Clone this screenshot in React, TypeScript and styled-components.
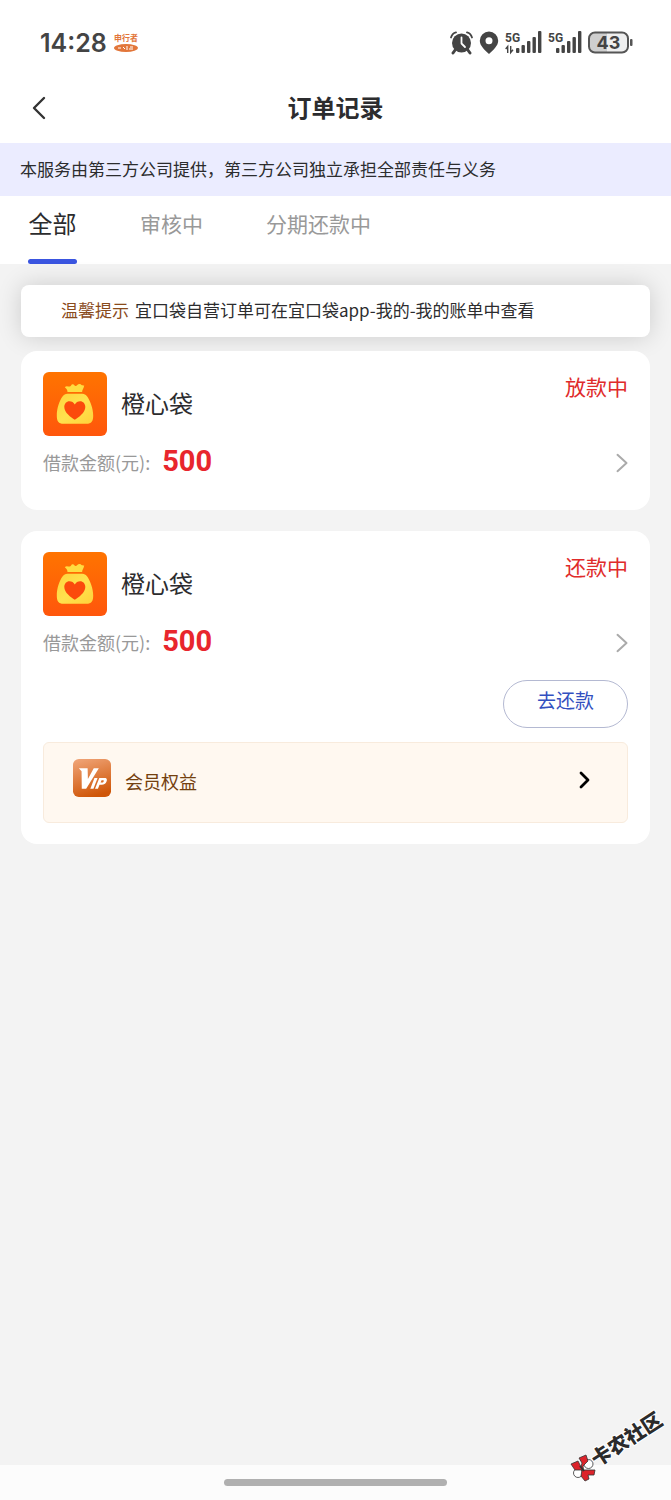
import React from "react";
import styled, { createGlobalStyle } from "styled-components";

const GlobalStyle = createGlobalStyle`
  *, *::before, *::after { box-sizing: border-box; }
  body {
    margin: 0;
    background: #f3f3f3;
    color: #2c2c2e;
    font-family: "Noto Sans CJK SC", "Noto Sans", sans-serif;
  }
  button { font: inherit; border: 0; background: none; padding: 0; cursor: pointer; }
  svg { display: block; flex: none; }
  h1, h2, p, ul, dl, dd { margin: 0; padding: 0; }
`;

const Page = styled.div`
  min-height: 100vh;
  display: flex;
  flex-direction: column;
  position: relative;
`;

const StatusBar = styled.div`
  height: 73px;
  padding: 12px 38px 0 40px;
  display: flex;
  align-items: center;
  justify-content: space-between;
  background: #fff;
`;

const StatusGroup = styled.div<{ $gap: number }>`
  display: flex;
  align-items: center;
  gap: ${(p) => p.$gap}px;
`;

const Clock = styled.time`
  font: 600 25px/32px Inter, sans-serif;
  color: #444;
`;

const Header = styled.header`
  height: 70px;
  padding: 0 27px;
  display: grid;
  grid-template-columns: 24px 1fr 24px;
  align-items: center;
  background: #fff;
`;

const IconButton = styled.button`
  display: flex;
  align-items: center;
  justify-content: center;
  color: inherit;
`;

const Title = styled.h1`
  padding-bottom: 2px;
  font-size: 24px;
  line-height: 32px;
  font-weight: 700;
  text-align: center;
`;

const Notice = styled.p`
  padding: 13px 20px 14px;
  background: #ebecff;
  font-size: 17px;
  line-height: 26px;
`;

const Tabs = styled.nav`
  height: 68px;
  padding: 0 28px;
  display: flex;
  gap: 63px;
  background: #fff;
`;

const Tab = styled.button<{ $active?: boolean }>`
  min-width: 49px;
  display: flex;
  flex-direction: column;
  align-items: center;
  justify-content: space-between;
  font-size: ${(p) => (p.$active ? 24 : 21)}px;
  line-height: 54px;
  color: ${(p) => (p.$active ? "#2c2c2e" : "#999")};
  white-space: nowrap;

  &::after {
    content: "";
    width: 100%;
    height: 5px;
    border-radius: 3px;
    background: ${(p) => (p.$active ? "#3a55e0" : "transparent")};
  }
`;

const Main = styled.main`
  flex: 1;
  padding: 21px;
`;

const Tip = styled.p`
  margin-bottom: 14px;
  padding: 12px 40px 14px;
  border-radius: 8px;
  background: #fff;
  box-shadow: 0 0 24px rgba(0, 0, 0, 0.16);
  font-size: 17px;
  line-height: 26px;
`;

const TipLabel = styled.strong`
  margin-right: 6px;
  font-weight: 400;
  color: #8a4b1c;
`;

const Card = styled.article`
  margin-bottom: 21px;
  padding: 21px 22px;
  border-radius: 16px;
  background: #fff;
`;

const CardTop = styled.div`
  display: flex;
  gap: 14px;
`;

const Name = styled.h2`
  flex: 1;
  font-size: 24px;
  line-height: 62px;
  font-weight: 400;
`;

const State = styled.span`
  font-size: 21px;
  line-height: 28px;
  color: #e02b2b;
`;

const AmountRow = styled.div`
  height: 53px;
  display: flex;
  align-items: center;
  justify-content: space-between;
  color: #999;
`;

const AmountLine = styled.dl`
  display: flex;
  align-items: center;
  gap: 12px;
  padding-bottom: 2px;
  font-size: 18px;
  line-height: 50px;
`;

const Amount = styled.dd`
  && { padding-bottom: 2px; }
  font: 700 29px/48px Roboto, sans-serif;
  color: #e8262d;
`;

const Actions = styled.div`
  display: flex;
  justify-content: flex-end;
  margin: 11px 0 14px;
`;

const RepayButton = styled.button`
  width: 125px;
  height: 48px;
  && {
    padding-bottom: 9px;
    border: 1px solid #b4b9d2;
  }
  border-radius: 24px;
  font-size: 19px;
  color: #3350c0;
`;

const Vip = styled.button`
  width: 100%;
  height: 81px;
  display: flex;
  align-items: center;
  gap: 14px;
  && {
    padding: 0 36px 8px 29px;
    border: 1px solid #f8ebdd;
    background: #fff8f0;
  }
  border-radius: 6px;
  text-align: left;
  color: #000;
`;

const VipIconBox = styled.span`
  padding-bottom: 2px;
`;

const VipLabel = styled.span`
  flex: 1;
  padding-top: 4px;
  font-size: 18px;
  line-height: 26px;
  color: #74400f;
`;

const VipArrow = styled.span`
  padding-top: 3px;
`;

const HomeArea = styled.footer`
  height: 35px;
  display: flex;
  align-items: center;
  justify-content: center;
  background: #fcfcfc;
`;

const HomeBar = styled.div`
  width: calc(100% / 3);
  height: 7px;
  border-radius: 4px;
  background: #b0b0b0;
`;

const Watermark = styled.svg`
  position: absolute;
  right: 0;
  bottom: 8px;
`;

const CarrierBadge = () => (
  <svg width="26" height="22" viewBox="0 0 26 22" aria-hidden="true">
    <text x="13" y="9" fontSize="8" fontWeight="700" textAnchor="middle" fill="#e2763a">申行者</text>
    <ellipse cx="13" cy="16" rx="12" ry="4" fill="#e2763a" />
    <path d="M5 16h3M10 15l2 2M14 14v4M17 15h3M16 17h4" stroke="#fff" strokeWidth="1" />
  </svg>
);

const AlarmIcon = () => (
  <svg width="23" height="24" viewBox="0 0 23 24" aria-hidden="true">
    <circle cx="11.500" cy="12" r="9.500" fill="#444" />
    <path d="M1 6.500C1.800 3.500 3.300 2 6 1.300M22 6.500C21.200 3.500 19.700 2 17 1.300" fill="none" stroke="#444" strokeWidth="1.800" strokeLinecap="round" />
    <path d="M5.500 18.500L3 22M17.500 18.500L20 22" stroke="#444" strokeWidth="3" strokeLinecap="round" />
    <path d="M11.500 6.500v6l3.500 3.500" fill="none" stroke="#fff" strokeWidth="1.800" strokeLinecap="round" strokeLinejoin="round" />
  </svg>
);

const PinIcon = () => (
  <svg width="20" height="24" viewBox="0 0 20 24" aria-hidden="true">
    <path fillRule="evenodd" d="M10 .5a9.200 9.200 0 0 0-9.200 9.200c0 5 5 9.300 9.200 13.300 4.200-4 9.200-8.300 9.200-13.300A9.200 9.200 0 0 0 10 .5zm0 5.700a3.500 3.500 0 1 1 0 7 3.500 3.500 0 0 1 0-7z" fill="#444" />
  </svg>
);

const SignalIcon = ({ data, start }: { data?: boolean; start: number }) => (
  <svg width={start + 26} height="24" viewBox={`0 0 ${start + 26} 24`} aria-hidden="true">
    <text x="0" y="11" fontSize="12" fontWeight="700" fontFamily="Roboto, sans-serif" fill="#444">5G</text>
    {data && <path d="M2.700 22v-6.500L.7 18M5.700 15v6.500L8 18.800" fill="none" stroke="#444" strokeWidth="1.400" />}
    {[17, 14, 10, 6, 0].map((top, i) => (
      <rect key={top} x={start + i * 5.500} y={top} width="3.400" height={22 - top} rx="1" fill="#444" />
    ))}
  </svg>
);

const BatteryIcon = () => (
  <svg width="45" height="24" viewBox="0 0 45 24" aria-hidden="true">
    <rect x="1" y="1.500" width="39" height="20" rx="6" fill="#efefef" />
    <path d="M7 1.500h12v20H7a6 6 0 0 1-6-6v-8a6 6 0 0 1 6-6z" fill="#cfcfcf" />
    <rect x="1" y="1.500" width="39" height="20" rx="6" fill="none" stroke="#555" strokeWidth="2" />
    <rect x="42" y="8" width="2.500" height="7" rx="1" fill="#555" />
    <text x="20.500" y="18" fontSize="18" fontWeight="700" textAnchor="middle" fontFamily="Inter, sans-serif" fill="#444">43</text>
  </svg>
);

const BackIcon = () => (
  <svg width="16" height="24" viewBox="0 0 16 24" aria-hidden="true">
    <path d="M13 2L3 12l10 10" fill="none" stroke="#333" strokeWidth="2.400" strokeLinecap="round" strokeLinejoin="round" />
  </svg>
);

const ChevronIcon = ({ bold }: { bold?: boolean }) => (
  <svg width="13" height="20" viewBox="0 0 13 20" aria-hidden="true">
    {bold ? (
      <path d="M3 3l7 7-7 7" fill="none" stroke="#000" strokeWidth="2.800" strokeLinecap="round" strokeLinejoin="round" />
    ) : (
      <path d="M2.500 1.800L11.500 10l-9 8.200" fill="none" stroke="#aaa" strokeWidth="2" strokeLinecap="round" strokeLinejoin="round" />
    )}
  </svg>
);

const BagLogo = ({ id }: { id: string }) => (
  <svg width="64" height="64" viewBox="0 0 64 64" aria-hidden="true">
    <defs>
      <linearGradient id={`${id}-bg`} x1="0" y1="0" x2="0" y2="1">
        <stop offset="0" stopColor="#ff7400" />
        <stop offset="1" stopColor="#ff560c" />
      </linearGradient>
      <linearGradient id={`${id}-bag`} x1="0" y1="0" x2="1" y2="1">
        <stop offset="0" stopColor="#ffd23c" />
        <stop offset="0.500" stopColor="#ffe24e" />
        <stop offset="1" stopColor="#ffd23a" />
      </linearGradient>
    </defs>
    <rect width="64" height="64" rx="6" fill={`url(#${id}-bg)`} />
    <path d="M24.500 20c0-2.500-1.200-3.500-2.700-4.800 1.200-1.500 3-.8 4.700-.6 1.400.2 1.600-2.300 3.200-2.300s1.600 1.700 2.900 1.700c1.400 0 1.800-2 4-2 1.900 0 1.200 1.700 4.600 1.400-.4 2.900-2.100 4.200-2.100 6.600z" fill="#ffdc40" />
    <path d="M24.500 21.700h14.700c2.300 0 3.500.8 4.800 2.600 3.200 4.500 6.200 12.500 6.200 19.200 0 5.800-1.700 8.300-6.700 8.300h-23c-5 0-6.700-2.500-6.700-8.300 0-6.700 2.500-14.700 5.900-19.200 1.300-1.800 2.500-2.600 4.800-2.600z" fill={`url(#${id}-bag)`} />
    <path d="M31.800 47.800c-3.800-2.600-10.500-7.200-10.500-12.900 0-3.400 2.300-5.700 5.100-5.700 2.300 0 4.400 1.200 5.400 3.300 1-2.100 3.100-3.300 5.400-3.300 2.800 0 5.100 2.300 5.100 5.700 0 5.700-6.700 10.300-10.500 12.900z" fill="#fb4a0c" />
  </svg>
);

const VipLogo = () => (
  <svg width="38" height="38" viewBox="0 0 39 39" aria-hidden="true">
    <defs>
      <linearGradient id="vip-bg" x1="0.200" y1="0" x2="0.500" y2="1">
        <stop offset="0" stopColor="#efa274" />
        <stop offset="1" stopColor="#cf5608" />
      </linearGradient>
    </defs>
    <rect width="39" height="39" rx="6" fill="url(#vip-bg)" />
    <path d="M6 9.500h9l.3 11 6-11h5.200L13.500 30.500H9L8.800 12.500z" fill="#fff" />
    <path d="M22 19.500h3.200L21 30.500h-3.200z" fill="#fff" />
    <path fillRule="evenodd" d="M27 19.500h5.500c2.500 0 2.700 2.200 1.700 4.200-.9 1.900-2.400 2.800-4.700 2.800h-2.300l-1.600 4h-3zm2.300 2.300l-1 2.400h1.700c1.500 0 2.200-2.400.8-2.400z" fill="#fff" />
  </svg>
);

interface Order {
  id: string;
  name: string;
  amount: number;
  state: string;
  repayable: boolean;
}

const orders: Order[] = [
  { id: "order-1", name: "橙心袋", amount: 500, state: "放款中", repayable: false },
  { id: "order-2", name: "橙心袋", amount: 500, state: "还款中", repayable: true },
];

const OrderCard = ({ order }: { order: Order }) => (
  <Card>
    <CardTop>
      <BagLogo id={order.id} />
      <Name>{order.name}</Name>
      <State>{order.state}</State>
    </CardTop>
    <AmountRow>
      <AmountLine>
        <dt>借款金额(元):</dt>
        <Amount>{order.amount}</Amount>
      </AmountLine>
      <IconButton aria-label="查看订单">
        <ChevronIcon />
      </IconButton>
    </AmountRow>
    {order.repayable && (
      <>
        <Actions>
          <RepayButton>去还款</RepayButton>
        </Actions>
        <Vip>
          <VipIconBox>
            <VipLogo />
          </VipIconBox>
          <VipLabel>会员权益</VipLabel>
          <VipArrow>
            <ChevronIcon bold />
          </VipArrow>
        </Vip>
      </>
    )}
  </Card>
);

export default function App() {
  return (
    <>
      <GlobalStyle />
      <Page>
        <StatusBar>
          <StatusGroup $gap={6}>
            <Clock>14:28</Clock>
            <CarrierBadge />
          </StatusGroup>
          <StatusGroup $gap={6}>
            <AlarmIcon />
            <PinIcon />
            <SignalIcon data start={11} />
            <SignalIcon start={8} />
            <BatteryIcon />
          </StatusGroup>
        </StatusBar>
        <Header>
          <IconButton aria-label="返回">
            <BackIcon />
          </IconButton>
          <Title>订单记录</Title>
        </Header>
        <Notice>本服务由第三方公司提供，第三方公司独立承担全部责任与义务</Notice>
        <Tabs>
          <Tab $active>全部</Tab>
          <Tab>审核中</Tab>
          <Tab>分期还款中</Tab>
        </Tabs>
        <Main>
          <Tip>
            <TipLabel>温馨提示</TipLabel>
            宜口袋自营订单可在宜口袋app-我的-我的账单中查看
          </Tip>
          {orders.map((order) => (
            <OrderCard key={order.id} order={order} />
          ))}
        </Main>
        <HomeArea>
          <HomeBar />
        </HomeArea>
        <Watermark width="104" height="88" viewBox="0 0 104 88">
          <g stroke="#333" strokeWidth="0.800" strokeLinejoin="round">
            <circle cx="21.500" cy="60" r="4.500" fill="#fff" />
            <circle cx="11" cy="69" r="4.500" fill="#fff" />
            <path d="M4 60l7-3 3 6 1-4-3-5 7-3 2 6-5 5 .5 4L28 66l-1 5-6 0 1 4-4 2-4-5 1-6-7 0z" fill="#dc232b" />
            <path d="M13 62l4 5" strokeWidth="2" />
          </g>
          <g transform="translate(34 51) rotate(-33)">
            <text x="-10" y="8" fontSize="20" fontWeight="900" fill="#2b2b2b" stroke="#fff" strokeWidth="2" paintOrder="stroke">卡农社区</text>
          </g>
        </Watermark>
      </Page>
    </>
  );
}
